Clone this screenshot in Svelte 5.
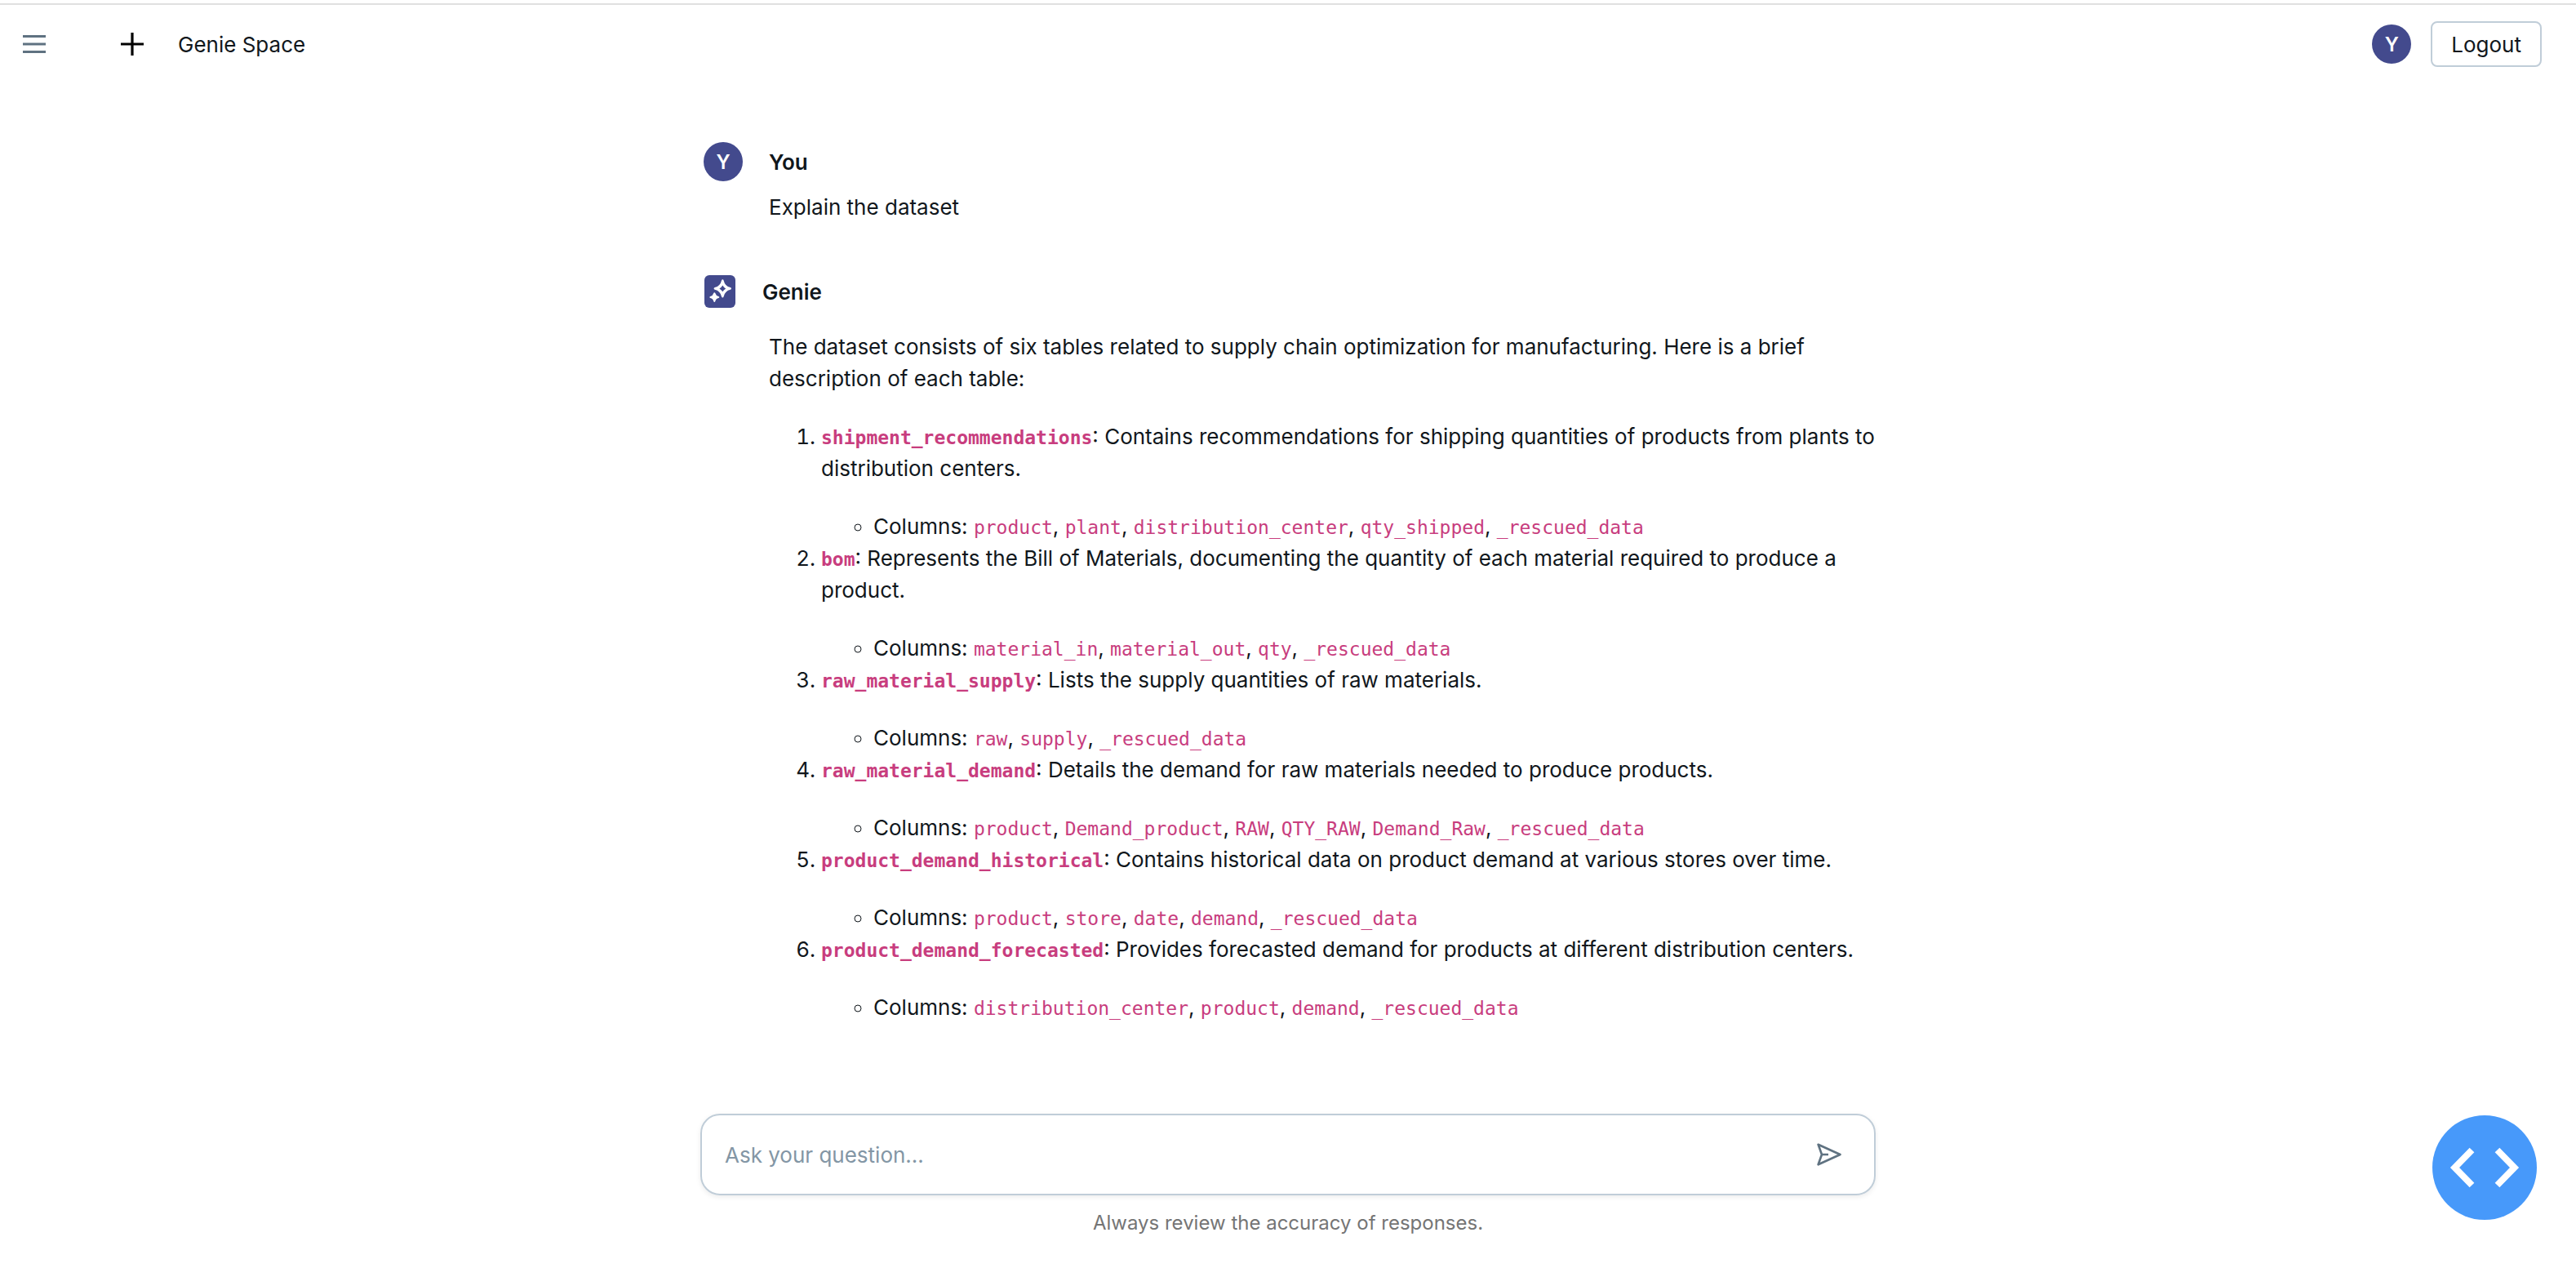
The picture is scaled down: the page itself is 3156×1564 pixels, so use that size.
<script>
  const tables = [
    {
      name: 'shipment_recommendations',
      text: 'Contains recommendations for shipping quantities of products from plants to distribution centers.',
      columns: ['product', 'plant', 'distribution_center', 'qty_shipped', '_rescued_data'],
    },
    {
      name: 'bom',
      text: 'Represents the Bill of Materials, documenting the quantity of each material required to produce a product.',
      columns: ['material_in', 'material_out', 'qty', '_rescued_data'],
    },
    {
      name: 'raw_material_supply',
      text: 'Lists the supply quantities of raw materials.',
      columns: ['raw', 'supply', '_rescued_data'],
    },
    {
      name: 'raw_material_demand',
      text: 'Details the demand for raw materials needed to produce products.',
      columns: ['product', 'Demand_product', 'RAW', 'QTY_RAW', 'Demand_Raw', '_rescued_data'],
    },
    {
      name: 'product_demand_historical',
      text: 'Contains historical data on product demand at various stores over time.',
      columns: ['product', 'store', 'date', 'demand', '_rescued_data'],
    },
    {
      name: 'product_demand_forecasted',
      text: 'Provides forecasted demand for products at different distribution centers.',
      columns: ['distribution_center', 'product', 'demand', '_rescued_data'],
    },
  ];

  let question = $state('');
</script>

<div class="app">
  <header>
    <button class="icon menu" aria-label="Toggle menu">
      <svg viewBox="0 0 28 28" width="28" height="28" aria-hidden="true">
        <path d="M0 3h28v3H0zM0 12.5h28v3H0zM0 22h28v3H0z" fill="currentColor" />
      </svg>
    </button>
    <button class="icon" aria-label="New chat">
      <svg viewBox="0 0 28 28" width="28" height="28" aria-hidden="true">
        <path d="M12.4 0h3.2v12.4H28v3.2H15.6V28h-3.2V15.6H0v-3.2h12.4z" fill="currentColor" />
      </svg>
    </button>
    <span class="title">Genie Space</span>
    <span class="avatar">Y</span>
    <button class="logout">Logout</button>
  </header>

  <main>
    <section class="message">
      <div class="author">
        <span class="avatar">Y</span>
        <h2>You</h2>
      </div>
      <p class="prompt">Explain the dataset</p>
    </section>

    <section class="message">
      <div class="author">
        <span class="badge">
          <svg viewBox="0 0 38 40" width="38" height="40" aria-hidden="true">
            <path
              d="M22.3 5.300q.9 0 1.300 1.300 1.600 7 8.200 8.500 1.200.4 1.200 1.300t-1.200 1.300q-6.600 1.500-8.200 8.500-.4 1.300-1.300 1.300t-1.300-1.300q-1.600-7-8.200-8.500-1.200-.4-1.200-1.300t1.200-1.300q6.600-1.500 8.200-8.500.4-1.300 1.300-1.300zM22.300 12.500q-1.400 2.500-3.900 3.900 2.500 1.400 3.900 3.900 1.400-2.500 3.900-3.900-2.500-1.400-3.900-3.900z"
              fill="#fff"
              fill-rule="evenodd"
            />
            <path
              d="M12.300 21.200q.8 0 1 .9.900 3.300 4.100 4 .9.300.9 1t-.9 1q-3.200.7-4.100 4-.2.900-1 .9t-1-.9q-.9-3.300-4.100-4-.9-.3-.9-1t.9-1q3.200-.7 4.100-4 .2-.9 1-.9z"
              fill="#fff"
            />
          </svg>
        </span>
        <h2>Genie</h2>
      </div>
      <div class="answer">
        <p>
          The dataset consists of six tables related to supply chain optimization for manufacturing. Here is a brief
          description of each table:
        </p>
        <ol>
          {#each tables as table}
            <li>
              <p><strong><code>{table.name}</code></strong>: {table.text}</p>
              <ul>
                <li>
                  Columns: {#each table.columns as column, i}{i > 0 ? ', ' : ''}<code>{column}</code>{/each}
                </li>
              </ul>
            </li>
          {/each}
        </ol>
      </div>
    </section>
  </main>

  <footer>
    <form class="composer" onsubmit={(e) => e.preventDefault()}>
      <input type="text" placeholder="Ask your question..." aria-label="Ask your question" bind:value={question} />
      <button class="icon send" aria-label="Send">
        <svg viewBox="0 0 32 32" width="32" height="32" aria-hidden="true">
          <path
            d="M1.600 3.700L28.500 16 1.600 28.300 6 16zM6 16H14"
            fill="none"
            stroke="currentColor"
            stroke-width="2.600"
            stroke-linejoin="round"
          />
        </svg>
      </button>
    </form>
    <p class="note">Always review the accuracy of responses.</p>
  </footer>

  <button class="code-toggle" aria-label="Open developer tools">
    <svg viewBox="0 0 128 128" width="128" height="128" aria-hidden="true">
      <path d="M48.500 42.500L27.500 64l21 21.500M79.500 42.500L100.500 64l-21 21.500" fill="none" stroke="#fff" stroke-width="8" />
    </svg>
  </button>
</div>

<style>
  :global(body) {
    background: #fff;
  }

  .app {
    box-sizing: border-box;
    display: flex;
    flex-direction: column;
    min-height: 100vh;
    padding-top: 4px;
    color: #11171c;
    font: 26px/39px Inter, 'Liberation Sans', sans-serif;
  }

  button {
    padding: 0;
    border: 0;
    background: none;
    color: inherit;
    font: inherit;
    cursor: pointer;
  }

  svg {
    display: block;
  }

  h2,
  p {
    margin: 0;
    font-size: 26px;
  }

  h2 {
    font-weight: 600;
  }

  header {
    display: flex;
    align-items: center;
    padding: 20px 42px 20px 28px;
    border-top: 2px solid #e0e0e0;
  }

  .menu {
    margin-right: 92px;
    color: #5f7281;
  }

  header .icon:not(.menu) {
    color: #000;
  }

  .title {
    flex: 1;
    margin-left: 42px;
  }

  .avatar {
    display: grid;
    place-items: center;
    width: 48px;
    height: 48px;
    border-radius: 50%;
    background: #434a8d;
    color: #fff;
    font-size: 24px;
    font-weight: 600;
  }

  .logout {
    box-sizing: border-box;
    height: 56px;
    margin-left: 24px;
    padding: 0 23px;
    border: 2px solid #c0cdd8;
    border-radius: 8px;
  }

  main,
  footer {
    box-sizing: border-box;
    width: 100%;
    max-width: 1440px;
    margin: 0 auto;
  }

  main {
    flex: 1;
    padding: 72px 0 48px 4px;
  }

  .message + .message {
    margin-top: 64px;
  }

  .author {
    display: flex;
    align-items: center;
    gap: 32px;
  }

  .badge {
    width: 38px;
    height: 40px;
    margin: 0 1px;
    border-radius: 6px;
    background: #434a8d;
  }

  .prompt,
  .answer {
    margin-left: 80px;
  }

  .prompt {
    margin-top: 12px;
  }

  .answer {
    margin-top: 28px;
  }

  ol {
    margin: 32px 0 0;
    padding-left: 64px;
  }

  ul {
    margin: 32px 0 0;
    padding-left: 64px;
    list-style: circle;
  }

  code {
    color: #c83d7e;
    font: 23px/1 'DejaVu Sans Mono', monospace;
  }

  strong code {
    font-weight: 700;
  }

  .composer {
    box-sizing: border-box;
    display: flex;
    align-items: center;
    height: 100px;
    padding: 0 38px 0 28px;
    border: 2px solid #c0cdd8;
    border-radius: 24px;
    box-shadow: 0 2px 6px rgb(0 0 0 / 8%);
  }

  .composer input {
    flex: 1;
    min-width: 0;
    padding: 0;
    border: 0;
    outline: 0;
    background: none;
    color: inherit;
    font: inherit;
  }

  .composer input::placeholder {
    color: #8396a5;
    opacity: 1;
  }

  .send {
    color: #5f7281;
  }

  .note {
    padding: 16px 0 48px;
    color: #757575;
    font-size: 24px;
    line-height: 36px;
    text-align: center;
  }

  .code-toggle {
    position: fixed;
    right: 48px;
    bottom: 70px;
    border-radius: 50%;
    background: #4799fa;
  }
</style>
